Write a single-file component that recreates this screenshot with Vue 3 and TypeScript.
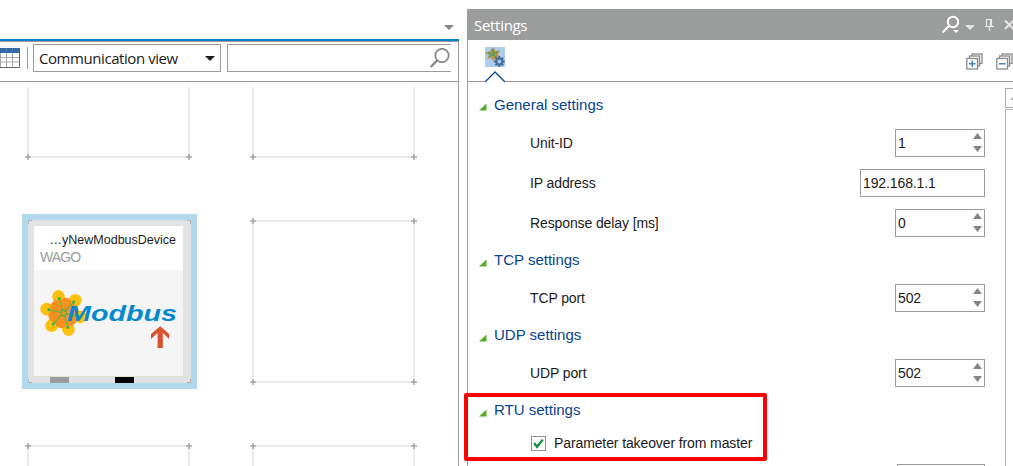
<script setup lang="ts">
interface Field {
  label: string
  value: string
  kind: 'number' | 'text'
}
interface Section {
  title: string
  fields: Field[]
}

const sections: Section[] = [
  {
    title: 'General settings',
    fields: [
      { label: 'Unit-ID', value: '1', kind: 'number' },
      { label: 'IP address', value: '192.168.1.1', kind: 'text' },
      { label: 'Response delay [ms]', value: '0', kind: 'number' },
    ],
  },
  { title: 'TCP settings', fields: [{ label: 'TCP port', value: '502', kind: 'number' }] },
  { title: 'UDP settings', fields: [{ label: 'UDP port', value: '502', kind: 'number' }] },
]

const columns: number[] = [28, 253]
const rows: number[] = [-4, 221, 446]
const slots = rows.flatMap((y) => columns.map((x) => ({ x, y: y - 87 })))
const petals: number[] = [-107, -47, 13, 73, 133, 193]
const teeth: number[] = [0, 45, 90, 135, 180, 225, 270, 315]
</script>

<template>
  <div class="app">
    <section class="workspace">
      <div class="tabstrip">
        <svg class="tab-caret" width="10" height="5"><path d="M0 0H10L5 5Z" fill="#858786" /></svg>
      </div>
      <div class="view">
        <div class="toolbar">
          <svg class="table-icon" width="20" height="20" viewBox="0 0 20 20">
            <rect width="20" height="20" fill="#fff" />
            <path d="M0 9.5H20M0 14H20M6.5 5V19M12.5 5V19M.5 5V19" stroke="#a8a8a8" fill="none" />
            <path d="M0 19.5H19.5V5" stroke="#666" fill="none" />
            <rect width="20" height="5" fill="#3469a5" />
            <path d="M6.5 0V4M12.5 0V4" stroke="#4b80b9" />
          </svg>
          <span class="divider"></span>
          <div class="select">
            <span class="select-text">Communication view</span>
            <svg width="10" height="5"><path d="M0 0H10L5 5Z" fill="#1d1d24" /></svg>
          </div>
          <div class="search">
            <svg width="20" height="20" viewBox="0 0 20 20" fill="none" stroke="#858585">
              <circle cx="12" cy="7.5" r="6.7" stroke-width="1.7" />
              <path d="M7.3 12.3L.8 19" stroke-width="2.2" />
            </svg>
          </div>
        </div>
        <div class="canvas">
          <svg class="grid" width="458" height="379">
            <g v-for="(s, i) in slots" :key="i">
              <rect :x="s.x" :y="s.y" width="161" height="161" fill="none" stroke="#ebebeb" stroke-width="2" />
              <path
                v-for="(c, j) in [[0, 0], [161, 0], [0, 161], [161, 161]]"
                :key="j"
                :d="`M${s.x + c[0] - 3} ${s.y + c[1]}h6m-3 -3v6`"
                stroke="#a4a4a4"
                stroke-width="1.5"
              />
            </g>
          </svg>
          <div class="device">
            <svg class="corners" width="163" height="163" fill="none" stroke="#b4b4b4">
              <path d="M.5 4V.5H4M159 .5H162.500V4M.5 159V162.500H4M159 162.500H162.500V159" />
            </svg>
            <div class="card">
              <div class="card-head">
                <div class="name">…yNewModbusDevice</div>
                <div class="vendor">WAGO</div>
              </div>
              <svg class="logo" width="149" height="106" viewBox="0 0 149 106">
                <g transform="translate(29.500 43)">
                  <g v-for="a in petals" :key="a" :transform="`rotate(${a})`">
                    <path d="M6 0L12 -5Q18 -8 22 -4.200Q25.500 0 22 4.200Q18 8 12 5Z" fill="#fdc010" />
                  </g>
                  <circle v-for="a in petals" :key="a" :transform="`rotate(${a + 30})`" cx="9" cy="0" r="6.500" fill="#f7901e" />
                  <circle r="7" fill="#f7901e" />
                  <g v-for="a in petals" :key="a" :transform="`rotate(${a})`">
                    <path d="M3 0H15" stroke="#70b62c" stroke-width="1.300" />
                    <circle cx="15" cy="0" r="1.600" fill="#3bb54a" />
                    <circle cx="3" cy="0" r="1.200" fill="#3bb54a" />
                  </g>
                </g>
                <text x="33" y="50.500" textLength="110" lengthAdjust="spacingAndGlyphs" class="wordmark">Modbus</text>
                <path d="M123.600 78V63L117 69V64L126.200 56.200L135.200 64V69L128.800 63V78Z" fill="#d9532f" />
              </svg>
            </div>
            <span class="port gray"></span>
            <span class="port black"></span>
          </div>
        </div>
      </div>
    </section>

    <section class="settings">
      <header class="titlebar">
        <span class="title">Settings</span>
        <svg class="title-icons" width="73" height="31" viewBox="940 9 73 31" fill="none">
          <circle cx="953" cy="22" r="5.200" stroke="#fff" stroke-width="2" />
          <path d="M949 26L942.500 32.500" stroke="#fff" stroke-width="2.200" />
          <path d="M953 30h6l-3 3Z" fill="#fff" />
          <path d="M965 25h10l-5 5Z" fill="#e4e4e4" />
          <path d="M986.500 26V19.500H991.500V26M990.500 19V26M985 26.500H994M989.500 27V31" stroke="#e8e8e8" stroke-width="1.200" />
          <path d="M1005 20.500L1013.500 29M1005 29L1013.500 20.500" stroke="#e8e8e8" stroke-width="1.800" />
        </svg>
      </header>
      <div class="tabs">
        <svg class="tab-icon" width="22" height="36" viewBox="0 0 22 36">
          <rect x="1" y="0" width="20" height="20" fill="#adcdf0" />
          <g transform="translate(9 7)">
            <path d="M0 -7L2.500 -3L7 -4L5 0L7 3L3 4L0 7L-2 4L-6 5L-4 1L-8 -1L-3 -3Z" fill="#b79650" />
            <path d="M0 -5V0L5 -2M0 0L3 4M0 0L-4 3M0 0L-5 -1" stroke="#5f9c57" stroke-width="1.500" fill="none" />
          </g>
          <g transform="translate(15.300 14.500)">
            <rect v-for="a in teeth" :key="a" :transform="`rotate(${a})`" x="-1" y="-5.500" width="2" height="3" fill="#456b98" />
            <circle r="3" fill="#adcdf0" stroke="#456b98" stroke-width="2" />
          </g>
          <path d="M1 35L11 25L21 35" fill="#fff" stroke="#0c4a94" stroke-width="1.400" />
        </svg>
        <svg class="expanders" width="47" height="17" viewBox="0 0 47 17">
          <g v-for="n in 2" :key="n" :transform="`translate(${(n - 1) * 30} 0)`" fill="#f6f6f6" stroke="#8c8c8c" stroke-width="1.300">
            <rect x="6" y="1" width="10" height="9.500" />
            <rect x="3.500" y="3" width="10" height="10" />
            <rect x=".8" y="5.500" width="10.700" height="10.500" fill="#fff" />
            <path :d="n === 1 ? 'M3 10.800H9.500M6.200 7.500V14' : 'M3 10.800H9.500'" stroke="#3d82c4" stroke-width="1.500" />
          </g>
        </svg>
      </div>
      <div class="body">
        <div class="form">
          <template v-for="s in sections" :key="s.title">
            <h3 class="heading">
              <svg width="8" height="8"><path d="M7.500 .5V7.500H0Z" fill="#56ad2b" /></svg>{{ s.title }}
            </h3>
            <div v-for="f in s.fields" :key="f.label" class="row">
              <span>{{ f.label }}</span>
              <div class="field" :class="f.kind">
                <span>{{ f.value }}</span>
                <svg v-if="f.kind === 'number'" width="9" height="20" fill="#848484">
                  <path d="M0 6L4.500 0L9 6ZM0 13H9L4.500 19Z" />
                </svg>
              </div>
            </div>
          </template>
          <h3 class="heading">
            <svg width="8" height="8"><path d="M7.500 .5V7.500H0Z" fill="#56ad2b" /></svg>RTU settings
          </h3>
          <div class="check-row">
            <span class="box">
              <svg width="13" height="13"><path d="M2.200 6L5 9.800L10.800 2.600" fill="none" stroke="#159247" stroke-width="2.300" /></svg>
            </span>
            <span>Parameter takeover from master</span>
          </div>
          <div class="row last"><div class="field clipped"></div></div>
        </div>
        <div class="scrollbar">
          <div class="scroll-up"><svg width="7" height="5"><path d="M0 4L4 0L7 3V4Z" fill="#aaa" /></svg></div>
          <div class="thumb"></div>
        </div>
      </div>
    </section>
    <div class="highlight"></div>
  </div>
</template>

<style>
body { margin: 0; overflow: hidden; }
</style>

<style scoped>
.app { position: relative; display: flex; gap: 8px; width: 1013px; height: 466px; overflow: hidden; background: #fefefe; font: 14px "Liberation Sans", Arial, sans-serif; color: #1b1b1b; }
.app * { box-sizing: border-box; }
svg { display: block; flex: none; }
.workspace { width: 459px; display: flex; flex-direction: column; }
.tabstrip { height: 39px; flex: none; display: flex; justify-content: flex-end; padding: 25px 5px 0 0; }
.view { flex: 1; min-height: 0; border-top: 2px solid #0a80c8; display: flex; flex-direction: column; }
.toolbar { height: 41px; flex: none; border: solid #9b9b9b; border-width: 1px 1px 1px 0; display: flex; align-items: flex-start; padding-top: 2px; }
.table-icon { margin-top: 4px; }
.divider { width: 1px; height: 22px; margin: 3px 5px 0 7px; background: #9b9b9b; }
.select { width: 188px; height: 28px; border: 1px solid #9b9b9b; display: flex; align-items: center; justify-content: space-between; padding: 0 5px; font: 15px "Open Sans", "Noto Sans", sans-serif; }
.select-text { white-space: nowrap; letter-spacing: -.43px; }
.search { width: 224px; height: 28px; margin-left: 6px; border: 1px solid #9b9b9b; border-right: 0; display: flex; justify-content: flex-end; padding: 3px 1px 0 0; }
.canvas { position: relative; flex: 1; min-height: 0; padding-top: 5px; border-right: 1px solid #9b9b9b; }
.device { position: absolute; left: 22px; top: 132px; width: 175px; height: 175px; border: 6px solid #b2d8ed; background: #e2e2e2; padding: 6px; }
.corners { position: absolute; left: 0; top: 0; }
.card { position: relative; width: 149px; height: 150px; background: #f5f5f5; }
.card-head { height: 44px; background: #fff; padding: 6px 7px 0 6px; }
.name { display: flex; justify-content: flex-end; white-space: nowrap; font-size: 12.5px; line-height: 17px; }
.vendor { color: #9b9d9c; font-size: 14px; line-height: 16px; letter-spacing: -.9px; }
.wordmark { font: italic bold 21.5px "Liberation Sans", Arial, sans-serif; fill: #0689ce; }
.port { position: absolute; bottom: 0; width: 19px; height: 6px; }
.gray { left: 22px; background: #9b9d9c; }
.black { left: 87px; background: #000; }
.settings { width: 546px; padding-top: 9px; display: flex; flex-direction: column; }
.titlebar { height: 31px; flex: none; background: #9b9d9c; display: flex; justify-content: space-between; align-items: center; padding-left: 7px; color: #fff; font: 15px "Open Sans", "Noto Sans", sans-serif; }
.title { letter-spacing: -.3px; }
.tabs { height: 42px; flex: none; border-left: 1px solid #9b9b9b; border-bottom: 1px solid #9b9b9b; display: flex; justify-content: space-between; padding: 7px 0 0 16px; }
.tab-icon { height: 36px; overflow: visible; }
.expanders { margin-top: 6px; }
.body { flex: 1; min-height: 0; border-left: 1px solid #9b9b9b; display: flex; justify-content: space-between; }
.form { width: 517px; padding-top: 5px; letter-spacing: -.11px; }
.heading { display: flex; align-items: center; gap: 7px; height: 35px; margin: 0; padding: 0 0 2px 11px; color: #064590; font-size: 15px; font-weight: normal; letter-spacing: 0; }
.heading svg { margin-top: 6px; }
.heading:first-child { height: 36px; }
.row { height: 40px; padding-left: 62px; display: flex; align-items: center; justify-content: space-between; }
.field { height: 28px; width: 90px; border: 1px solid #9b9b9b; padding: 0 2px; display: flex; align-items: center; justify-content: space-between; }
.field.text { width: 125px; }
.check-row { height: 30px; padding-left: 63px; display: flex; align-items: center; gap: 8px; }
.box { width: 15px; height: 15px; border: 1px solid #929292; }
.row.last { padding-top: 6px; align-items: flex-start; justify-content: flex-end; }
.field.clipped { width: 88px; }
.scrollbar { width: 8px; padding-top: 6px; }
.scroll-up { height: 20px; border: 1px solid #a8a8a8; border-right: 0; padding: 7px 0 0 4px; overflow: hidden; }
.thumb { height: 400px; margin-top: 1px; border: solid #b2b2b2; border-width: 1px 0 0 1px; }
.highlight { position: absolute; left: 464px; top: 393px; width: 303px; height: 68px; border: 4px solid #f00; border-radius: 2px; }
</style>
